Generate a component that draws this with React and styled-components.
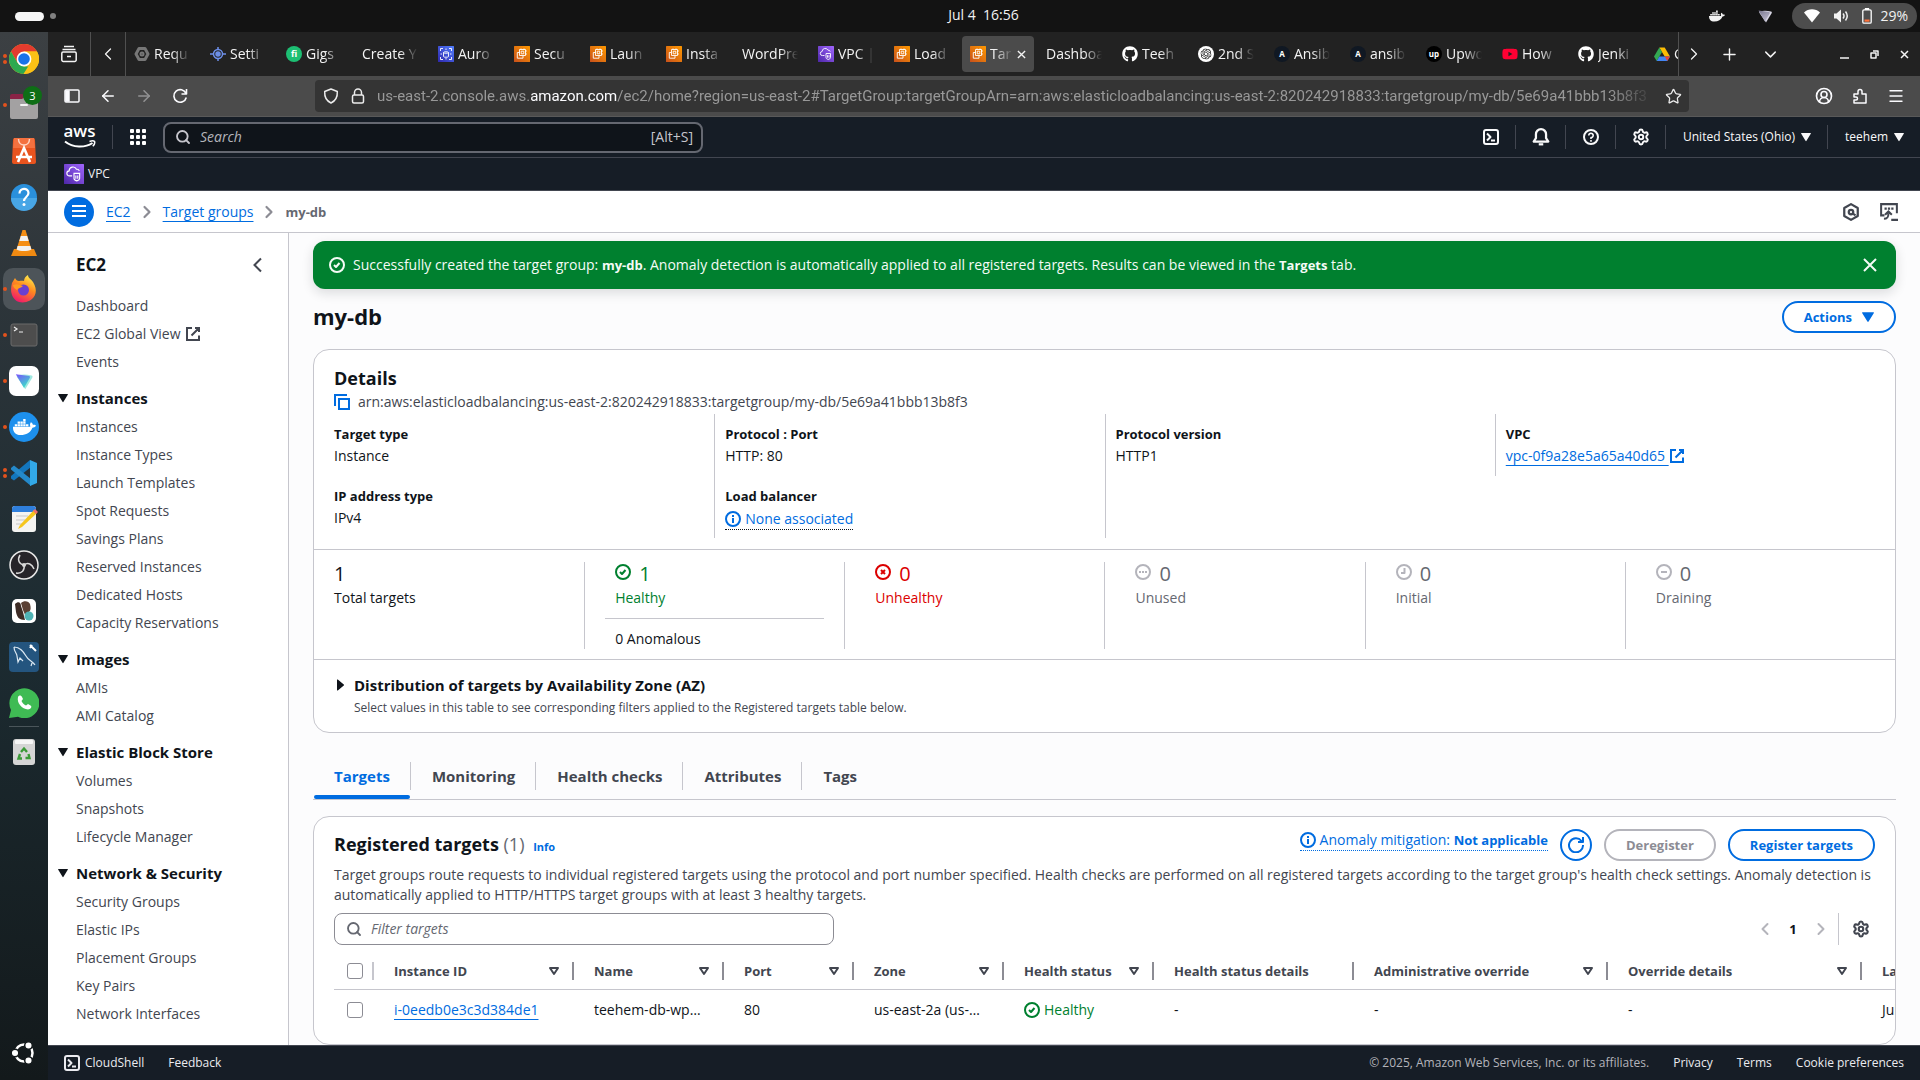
import React from "react";
import styled, { createGlobalStyle, css } from "styled-components";
import { Settings, Menu as MenuIcon, Search, Plus, ChevronDown, ChevronLeft, ChevronRight, ArrowLeft, ArrowRight, Star, CircleUserRound } from "lucide-react";
import { FaDocker, FaGithub, FaYoutube } from "react-icons/fa";
import { SiOpenai } from "react-icons/si";

const blue = "#006ce0";
const line = "#c6c6cd";
const navText = "#424650";
const ink = "#0f141a";

const GlobalStyle = createGlobalStyle`
  * { box-sizing: border-box; }
  body { margin: 0; font-family: "Open Sans", "Noto Sans", sans-serif; font-size: 14px; line-height: 20px; color: ${ink}; }
  button, input { font: inherit; color: inherit; }
  button { background: none; border: 0; padding: 0; display: inline-flex; align-items: center; justify-content: center; }
  h1, h2, h3, p, ul, dl, dd, dt { margin: 0; padding: 0; }
  ul { list-style: none; }
  svg { display: block; flex: none; }
`;

/* ---------- shell ---------- */
const Desktop = styled.div`
  display: flex; flex-direction: column; height: 100vh; overflow: hidden; background: #131313;
`;
const SystemBar = styled.header`
  flex: none; height: 32px; padding: 0 3px 0 50px; background: #131313; color: #f2f2f2;
  display: grid; grid-template-columns: 1fr auto 1fr; align-items: center; font-size: 14px; line-height: 18px;
`;
const Workspaces = styled.div`
  display: flex; align-items: center; gap: 6px; margin-left: -35px;
`;
const WorkspaceMark = styled.span`
  width: ${(p) => (p.$active ? 29 : 6)}px; height: ${(p) => (p.$active ? 9 : 6)}px;
  border-radius: 5px; background: ${(p) => (p.$active ? "#f6f6f6" : "#808080")};
`;
const Clock = styled.time`white-space: pre; padding-bottom: 2px;`;
const Tray = styled.div`display: flex; justify-content: flex-end; align-items: center;`;
const TrayIcon = styled.span`width: 48px; display: flex; justify-content: center;`;
const StatusPill = styled.button`
  height: 26px; margin-left: 3px; padding: 0 9px 0 12px; gap: 13px; border-radius: 13px; background: #4d4d4d;
`;
const Charge = styled.span`display: flex; align-items: center; gap: 8px;`;
const Stage = styled.div`flex: 1; min-height: 0; display: flex;`;

/* ---------- dock ---------- */
const Dock = styled.nav`
  flex: none; width: 48px; padding: 6px 3px 6px; display: flex; flex-direction: column; gap: 4px;
  background: linear-gradient(#3c4043 0, #2d353a 260px, #1c2b31 620px, #13191b 1048px);
`;
const DockButton = styled.button`
  position: relative; width: 42px; height: 42px; border-radius: 10px;
  background: ${(p) => (p.$active ? "#4d5459" : "none")};
  ${(p) => p.$last && css`margin-top: auto;`}
`;
const RunDots = styled.span`
  position: absolute; left: 0; top: 0; bottom: 0; display: flex; flex-direction: column; justify-content: center; gap: 2px;
  i { width: 4px; height: 4px; border-radius: 50%; background: #e2521d; }
`;
const Badge = styled.span`
  position: absolute; right: 3px; top: 2px; width: 19px; height: 19px; border-radius: 50%;
  background: #0e6e16; color: #fff; font-size: 11px; line-height: 19px; text-align: center;
`;
const DockRule = styled.hr`width: 30px; height: 1px; border: 0; background: #4a555a; margin: -2px auto 0;`;

/* ---------- browser chrome ---------- */
const Browser = styled.div`flex: 1; min-width: 0; display: flex; flex-direction: column;`;
const TabStrip = styled.div`
  flex: none; height: 44px; display: flex; background: #222222; color: #f4f4f4;
`;
const StripButton = styled.button`
  flex: none; width: ${(p) => p.$w}px; ${(p) => p.$rule && css`border-right: 1px solid #505050;`}
`;
const TabList = styled.div`
  flex: 1; min-width: 0; overflow: hidden; display: flex; align-items: center;
  border-right: 1px solid #505050;
`;
const Tab = styled.button`
  flex: none; width: 72px; height: 36px; margin-right: 4px; padding: 0 8px; gap: 4px; border-radius: 4px;
  justify-content: flex-start; background: ${(p) => (p.$active ? "#4b4b4b" : "none")};
`;
const TabText = styled.span`
  flex: 1; min-width: 0; overflow: hidden; white-space: nowrap; text-align: left;
  mask-image: linear-gradient(90deg, #000 calc(100% - 18px), transparent);
`;
const WindowButtons = styled.div`flex: none; width: 129px; display: flex; justify-content: space-between; padding: 0 11px 0 49px;`;
const AddressRow = styled.div`
  flex: none; height: 41px; padding: 0 6px 0 0; display: flex; align-items: center; background: #4b4b4b;
  border-bottom: 1px solid #595959; color: #fbfbfe;
`;
const NavButtons = styled.div`display: flex; padding-left: 6px;`;
const NavButton = styled.button`width: 36px; height: 32px; opacity: ${(p) => (p.disabled ? 0.4 : 1)};`;
const AddressBox = styled.div`
  flex: 0 1 1374px; min-width: 0; height: 32px; margin: 0 auto 0 117px; padding: 0 7px 0 8px; gap: 11px;
  display: flex; align-items: center; border-radius: 4px; background: #343434; color: #ececec;
`;
const Address = styled.div`
  flex: 1; min-width: 0; overflow: hidden; white-space: nowrap; font-family: Roboto, "Open Sans", sans-serif; font-size: 15px; color: #989898;
  mask-image: linear-gradient(90deg, #000 calc(100% - 44px), transparent);
  b { font-weight: 400; color: #fbfbfe; }
`;
const RightTools = styled.div`display: flex; margin-left: auto;`;

/* ---------- aws header ---------- */
const AwsBar = styled.header`
  flex: none; height: 41px; padding-left: 16px; display: flex; align-items: center; background: #161d26; color: #f9f9fa;
  border-bottom: 1px solid #424650; font-size: 12px;
`;
const LogoLink = styled.a`padding-right: 16px; border-right: 1px solid #424650; display: flex; align-items: center; height: 24px; color: #fff;`;
const Services = styled.button`width: 50px;`;
const GlobalSearch = styled.label`
  flex: 0 1 540px; height: 31px; padding: 0 8px 0 10px; display: flex; align-items: center; gap: 9px; font-size: 14px;
  border: 2px solid #656871; border-radius: 8px; background: #0f141a; color: #c6c6cd;
  input { flex: 1; min-width: 0; background: none; border: 0; outline: 0; padding: 0; }
  input::placeholder { color: #b4b4bb; font-style: italic; opacity: 1; }
`;
const AwsTools = styled.div`display: flex; margin-left: auto;`;
const AwsTool = styled.button`
  height: 24px; width: ${(p) => (p.$text ? "auto" : "50px")}; padding: ${(p) => (p.$text ? "0 16px 0 17px" : 0)}; gap: 6px;
  border-right: 1px solid #424650; &:last-child { border-right: 0; }
`;
const Favorites = styled.nav`
  flex: none; height: 33px; padding: 0 16px; display: flex; align-items: center; background: #161d26;
  border-bottom: 1px solid #424650;
  a { display: flex; align-items: center; gap: 4px; color: #f0f0f2; font-size: 12px; text-decoration: none; }
`;
const CrumbBar = styled.nav`
  flex: none; height: 42px; padding: 0 22px 0 16px; display: flex; align-items: center; background: #fff; border-bottom: 1px solid ${line};
`;
const MenuButton = styled.button`width: 30px; height: 30px; border-radius: 50%; background: ${blue}; color: #fff; margin-right: 12px; padding-bottom: 2px;`;
const Link = styled.a`color: ${blue}; text-decoration: underline; text-underline-offset: 4px; text-decoration-thickness: 1px;`;
const Crumbs = styled.div`display: flex; align-items: center; gap: 6px; b { font-size: 13px; color: #656871; }`;
const CrumbTools = styled.div`margin-left: auto; display: flex; gap: 20px; color: ${navText};`;

/* ---------- side navigation ---------- */
const Page = styled.div`flex: 1; min-height: 0; display: flex; background: #fcfcfd;`;
const Side = styled.aside`
  flex: none; width: 241px; overflow: hidden; background: #fff; border-right: 1px solid ${line};
`;
const SideHead = styled.div`
  display: flex; justify-content: space-between; align-items: center; padding: 20px 22px 16px 28px; height: 59px;
  h2 { font-size: 17px; line-height: 24px; } button { color: ${navText}; }
`;
const SideList = styled.ul`
  padding-left: 28px;
  li { height: 28px; display: flex; align-items: center; }
  a { color: ${navText}; text-decoration: none; display: flex; align-items: center; gap: 5px; }
`;
const SideGroup = styled.button`
  height: 30px; padding-left: 10px; gap: 8px; font-weight: 700; font-size: 15px; margin-top: 7px; display: flex;
`;

/* ---------- main ---------- */
const Main = styled.main`flex: 1; min-width: 0; overflow: hidden; padding: 8px 24px 0;`;
const Flash = styled.div`
  height: 48px; padding: 0 18px 0 16px; display: flex; align-items: center; gap: 8px; border-radius: 12px;
  background: #00802f; color: #f4fbf6; box-shadow: 0 4px 12px rgba(15, 20, 26, 0.14);
  b { font-size: 13px; } button { margin-left: auto; }
`;
const TitleRow = styled.div`
  height: 60px; padding-top: 12px; display: flex; justify-content: space-between; align-items: flex-start;
  h1 { font-size: 22px; line-height: 30px; }
`;
const Pill = styled.button`
  height: 32px; padding: 0 20px; gap: 10px; font-weight: 700; font-size: 13px; border-radius: 20px; border: 2px solid ${blue}; color: ${blue}; background: #fff;
  &:disabled { border-color: #b4b4bb; color: #8c8c94; }
`;
const RoundPill = styled(Pill)`width: 32px; padding: 0;`;
const Card = styled.section`border: 1px solid ${line}; border-radius: 16px; background: #fff; overflow: hidden;`;
const CardHead = styled.div`
  padding: 16px 20px 2px;
  h2 { font-size: 18px; line-height: 24px; }
`;
const Arn = styled.p`
  display: flex; align-items: center; gap: 8px; margin-top: 2px; color: ${navText};
  button { color: ${blue}; }
`;
const Facts = styled.div`
  display: grid; grid-template-columns: repeat(4, 1fr); align-items: start; padding: 0 10px 11px; border-bottom: 1px solid ${line};
`;
const FactColumn = styled.dl`
  & + & { border-left: 1px solid ${line}; }
  > div { padding: 10px; }
  dt { font-weight: 700; font-size: 13px; margin-bottom: 2px; }
  dd { height: 20px; display: flex; }
  a { display: flex; align-items: center; }
`;
const Hint = styled.button`
  height: 22px; gap: 4px; color: ${blue}; border-bottom: 1px dotted ${(p) => (p.$ink ? ink : blue)};
  b { font-size: 13px; }
`;
const Stats = styled.div`
  display: grid; grid-template-columns: repeat(6, 1fr); padding: 12px 10px 10px; border-bottom: 1px solid ${line};
`;
const Stat = styled.div`
  padding: 0 20px; color: ${(p) => p.$tone || ink};
  & + & { border-left: 1px solid ${line}; }
  &:first-child { padding-left: 0; }
`;
const StatBody = styled.div`padding: 0 10px;`;
const StatValue = styled.div`
  display: flex; gap: 8px; font-size: 20px; line-height: 24px; height: 26px;
  svg { margin-top: 2px; }
`;
const StatExtra = styled.div`margin-top: 10px; padding: 10px 10px 0; border-top: 1px solid ${line}; color: ${ink};`;
const StatIcon = styled.span`color: ${(p) => (p.$muted ? "#b4b4bb" : "inherit")};`;
const Expander = styled.div`
  padding: 13px 20px 13px; display: flex; gap: 7px;
  h3 { font-size: 15px; line-height: 24px; }
  p { font-size: 12px; color: ${navText}; line-height: 22px; }
  button { height: 24px; width: 13px; }
`;
const Tabs = styled.div`
  display: flex; margin-top: 29px; border-bottom: 1px solid ${line};
`;
const PageTab = styled.button`
  flex-direction: column; align-items: stretch; font-size: 15px; font-weight: 700; color: ${(p) => (p.$active ? blue : navText)};
  span { height: 28px; line-height: 28px; padding: 0 20px 0 21px; border-right: 1px solid ${line}; }
  &:last-child span { border-right: 0; }
  &::after { content: ""; height: 4px; margin: 5px 1px 0; border-radius: 2px; background: ${(p) => (p.$active ? blue : "transparent")}; }
`;
const TargetsCard = styled(Card)`margin-top: 16px; padding: 12px 0 14px 20px;`;
const TargetsHead = styled.div`
  display: flex; align-items: center; height: 32px; padding-right: 20px; gap: 12px;
  h2 { font-size: 18px; line-height: 24px; flex: 1; }
  h2 span { font-weight: 400; color: #656871; }
  h2 a { font-size: 11px; text-decoration: none; margin-left: 4px; }
`;
const HintSlot = styled.div`align-self: flex-start;`;
const Blurb = styled.p`margin: 4px 20px 8px 0; color: ${navText};`;
const FilterRow = styled.div`display: flex; align-items: center; justify-content: space-between; padding-right: 20px;`;
const FilterBox = styled.label`
  width: 500px; height: 32px; padding: 0 11px; display: flex; align-items: center; gap: 9px; border: 1px solid #8c8c94; border-radius: 8px; color: #656871;
  input { flex: 1; border: 0; outline: 0; padding: 0; background: none; }
  input::placeholder { color: #656871; font-style: italic; opacity: 1; }
`;
const Pager = styled.div`
  display: flex; align-items: center; height: 32px;
  button { width: 28px; height: 32px; color: #b4b4bb; }
  button[aria-current] { color: ${ink}; font-weight: 700; font-size: 13px; }
`;
const Prefs = styled.div`
  margin-left: 3px; padding-left: 8px; border-left: 1px solid ${line};
  && button { color: ${navText}; }
`;
const Table = styled.table`
  margin-top: 10px; width: 1762px; table-layout: fixed; border-collapse: collapse;
  th { height: 34px; padding: 0 0 2px; text-align: left; font-size: 13px; color: ${navText}; border-bottom: 1px solid ${line}; }
  td { height: 41px; padding: 0 22px 0 20px; overflow: hidden; text-overflow: ellipsis; white-space: nowrap; }
`;
const HeadCell = styled.div`
  display: flex; align-items: center; gap: 13px; height: 18px; padding-left: ${(p) => (p.$check ? 13 : 20)}px;
  border-right: 2px solid ${(p) => (p.$check ? line : "#8c8c94")};
  span { flex: 1; white-space: nowrap; } button { padding-right: 13px; }
`;
const CheckCell = styled.td`&& { padding: 0 0 0 13px; }`;
const Check = styled.input`
  appearance: none; display: block; width: 16px; height: 16px; margin: 0; border: 1px solid #8c8c94; border-radius: 3px; background: #fff;
`;
const Health = styled.span`display: flex; align-items: center; gap: 4px; color: #00802f;`;

/* ---------- footer ---------- */
const Footer = styled.footer`
  flex: none; height: 35px; padding: 0 16px; display: flex; align-items: center; background: #161d26; border-top: 1px solid #424650;
  color: #ebebf0; font-size: 12px;
  button { gap: 5px; margin-right: 24px; }
  a { color: inherit; text-decoration: none; margin-left: 24px; }
`;
const Copyright = styled.span`margin-left: auto; color: #b4b4bb;`;

/* ---------- icons ---------- */
const Ico = ({ s = 16, w = 2, vb = 16, children, ...r }) => (
  <svg width={s} height={s} viewBox={`0 0 ${vb} ${vb}`} fill="none" stroke="currentColor" strokeWidth={w} strokeLinejoin="round" aria-hidden="true" {...r}>{children}</svg>
);
const External = () => <Ico strokeLinejoin="miter"><path d="M10 2h4v4M6.500 9.500 14 2M14 9.500V14H2V2h5" /></Ico>;
const Copy = () => <Ico strokeLinejoin="miter"><path d="M15 5H5v10h10zM13 1H1v11" /></Ico>;
const Ok = () => <Ico><circle cx="8" cy="8" r="7" /><path d="m5 8 2 2 3.500-4" /></Ico>;
const Bad = () => <Ico><circle cx="8" cy="8" r="7" /><path d="m10 6-4 4M10 10 6 6" /></Ico>;
const Dots = () => <Ico><circle cx="8" cy="8" r="7" /><path d="M4 8h2M7 8h2M10 8h2" /></Ico>;
const Wait = () => <Ico><circle cx="8" cy="8" r="7" /><path d="M8.500 4v5H5" /></Ico>;
const Minus = () => <Ico><circle cx="8" cy="8" r="7" /><path d="M5 8h6" /></Ico>;
const Info = () => <Ico><circle cx="8" cy="8" r="7" /><path d="M8 7v5M8 4v2" /></Ico>;
const Refresh = () => <Ico><path d="M10 5h5V0M15 8a7 7 0 1 1-1.500-4L15 5" /></Ico>;
const Shell = ({ s }) => <Ico s={s}><rect x="1" y="1" width="14" height="14" rx="2" /><path d="m4 4.500 3.500 3.500L4 11.500M8 11.500h4" /></Ico>;
const Caret = ({ s = 10 }) => <svg width={s} height={s} viewBox="0 0 10 10" fill="currentColor"><path d="M.5 1h9a.4.4 0 0 1 .4.6L5.500 8.800a.6.6 0 0 1-1 0L.1 1.600A.4.4 0 0 1 .5 1z" /></svg>;
const CaretRight = () => <svg width="9" height="12" viewBox="0 0 9 12" fill={ink}><path d="M1 1v10a.5.5 0 0 0 .8.4l6-5a.5.5 0 0 0 0-.8l-6-5A.5.5 0 0 0 1 1z" /></svg>;
const Filter = () => <Ico s={10} vb={10}><path d="M1 2h8L5 8z" /></Ico>;
const Bell = () => <Ico s={18}><path d="M8 1a4.500 4.500 0 0 0-4.500 4.500V9L1.500 12h13l-2-3V5.500A4.500 4.500 0 0 0 8 1z" /><path d="M6 14.500h4" /></Ico>;
const Help = () => <Ico><circle cx="8" cy="8" r="7" /><path d="M5.800 6.500A2.200 2.200 0 1 1 8 8.600v1.400M8 11v1.800" strokeWidth="1.600" /></Ico>;
const Grid = () => <svg width="17" height="17" viewBox="0 0 17 17" fill="#fff">{[0, 6, 12].map((y) => [0, 6, 12].map((x) => <rect key={x + "-" + y} x={x} y={y} width="4" height="4" rx="1" />))}</svg>;
const Glass = ({ s = 16 }) => <Search size={s} strokeWidth={2.8} />;
const AwsLogo = () => (
  <svg width="32" height="26" viewBox="0 0 32 26">
    <text x="15.500" y="13" textAnchor="middle" fontSize="17" fontWeight="600" fill="#fff" fontFamily="Open Sans">aws</text>
    <path d="M1 17.500c8 6.500 20 6.500 27.500 1.500" fill="none" stroke="#fff" strokeWidth="2" />
    <path d="M25.500 17.500c2-.8 4-.9 5-.2.500 1.500-.3 3.700-1.700 5" fill="none" stroke="#fff" strokeWidth="1.500" />
  </svg>
);
const Tile = ({ s = 16, a, b, id, children }) => (
  <svg width={s} height={s} viewBox="0 0 16 16" fill="none" stroke="#fff" strokeWidth=".9">
    <defs><linearGradient id={id} x1="0" y1="1" x2="1" y2="0"><stop stopColor={a} /><stop offset="1" stopColor={b} /></linearGradient></defs>
    <rect width="16" height="16" rx=".5" fill={`url(#${id})`} stroke="none" />{children}
  </svg>
);
const Ec2 = () => <Tile a="#c8511b" b="#f90" id="ec2"><path d="M5.500 3.500h6v6h-6zM7.200 5.200h2.600v2.600H7.200zM9 9.500v2.700H3.300V6.500h2.200M7 3.500V2.500M10 3.500V2.500M11.500 5h1.400M11.500 8h1.400" /></Tile>;
const VpcIcon = ({ s }) => <Tile s={s} a="#4d27a8" b="#a166ff" id="vpc"><path d="M6.500 9.500H4.500a2 2 0 0 1-.4-4A3.100 3.100 0 0 1 10 4.200c1.500-.2 2 .5 2.200 1.400M8 7.500h4.500v4c0 1-1 1.600-2.200 2-1.300-.4-2.300-1-2.300-2zM9.500 9.200v2.500M11 9.200v2.500" /></Tile>;
const Aurora = () => <Tile a="#2e27ad" b="#527fff" id="aur"><path d="M5.500 6.500c0-1 5-1 5 0v4c0 1-5 1-5 0zM5.500 6.500c0 1 5 1 5 0M2.500 5V2.500H5M11 2.500h2.500V5M13.500 11v2.500H11M5 13.500H2.500V11M2.500 8h1.500M12 8h1.500M8 2.500v1.500M8 12v1.500" /></Tile>;
const Nut = () => <Ico w={3} color="#777"><path d="M5 2.500h6L14 8l-3 5.500H5L2 8z" /><circle cx="8" cy="8" r="1.500" strokeWidth="2" /></Ico>;
const Orbit = () => <Ico w={1.5} color="#6d8fe8"><circle cx="8" cy="8" r="4.500" /><circle cx="8" cy="8" r="2" fill="currentColor" /><path d="M0 8h3.500M12.500 8H16M8 1v2.500M8 12.500V15" /></Ico>;
const Disc = ({ bg, children, size = 8 }) => (
  <svg width="16" height="16" viewBox="0 0 16 16"><circle cx="8" cy="8" r="8" fill={bg} /><text x="8" y="11" textAnchor="middle" fontSize={size} fontWeight="700" fill="#fff" fontFamily="Open Sans">{children}</text></svg>
);
const Drive = () => <svg width="16" height="16" viewBox="0 0 16 16"><path d="M5.300 1.500h5.400L16 10.500h-5.300z" fill="#fbbc04" /><path d="M5.300 1.500 8 6 2.700 15 0 10.500z" fill="#34a853" /><path d="M5.300 10.500H16L13.300 15H2.700z" fill="#4285f4" /><path d="M10.700 10.500H16L13.300 15z" fill="#ea4335" /></svg>;
const Gpt = () => <svg width="16" height="16" viewBox="0 0 16 16"><circle cx="8" cy="8" r="8" fill="#fff" /><g transform="translate(2.500 2.500)"><SiOpenai size={11} color="#111" /></g></svg>;
const Proton = ({ s = 16, mono }) => (
  <svg width={s} height={s} viewBox="0 0 16 16"><defs><linearGradient id={mono ? "pm" : "pc"} x1="0" y1="0" x2=".6" y2="1"><stop stopColor={mono ? "#77758c" : "#7b4dff"} /><stop offset="1" stopColor={mono ? "#bbb8cc" : "#3be0c8"} /></linearGradient></defs>
    <path d="M2 3.500c4-1 8-1 12 0 1 .3 1 1 .6 1.800L9 14.500 2.500 5z" fill={mono ? "#d8d6e4" : "#9fe8e0"} /><path d="M1.500 2.500 12 4c.8.2 1 .8.600 1.500L8 13.500z" fill={`url(#${mono ? "pm" : "pc"})`} /></svg>
);

/* dock artwork, each drawn on a 30 unit square */
const Art = ({ children }) => <svg width="30" height="30" viewBox="0 0 30 30">{children}</svg>;
const Chrome = () => <Art><circle cx="15" cy="15" r="15" fill="#fbc116" /><path d="M2 7.500A15 15 0 0 1 28 7.500H15L8.500 18.700z" fill="#e33b2e" /><path d="M2 7.500 8.500 18.700 15 22.500h6.500L14.500 30A15 15 0 0 1 2 7.500z" fill="#2da94f" /><path d="M21.500 18.700 14.500 30A15 15 0 0 0 28 7.500H15z" fill="#fbc116" /><circle cx="15" cy="15" r="7.400" fill="#fff" /><circle cx="15" cy="15" r="5.800" fill="#1a73e8" /></Art>;
const Files = () => <Art><rect x="1" y="4" width="14" height="12" rx="2" fill="#8a2346" /><path d="M1 9h12l3-2h13v20a2 2 0 0 1-2 2H3a2 2 0 0 1-2-2z" fill="#a3a1a2" /><rect x="11" y="14" width="8" height="2" rx="1" fill="#f3f3f3" /></Art>;
const Store = () => <Art><path d="M6 2h18a2 2 0 0 1 2 2l1 22a2 2 0 0 1-2 2H5a2 2 0 0 1-2-2L4 4a2 2 0 0 1 2-2z" fill="#e9541f" /><path d="M5 2h20l1 10H4z" fill="#f4713f" /><path d="M9.500 3c0 8 11 8 11 0" fill="none" stroke="#ffd2bf" strokeWidth="1.500" /><path d="M9 26 15 12l6 14M7 21h16" fill="none" stroke="#fff" strokeWidth="2.600" /></Art>;
const HelpDock = () => <Art><circle cx="15" cy="15" r="13" fill="#2a90dc" /><path d="M2 16h26a13 13 0 0 1-26 0z" fill="#48a6e6" /><path d="M10.500 11.500c0-6 9-6 9-.5 0 4-4.500 4-4.500 8" fill="none" stroke="#fff" strokeWidth="2.200" /><circle cx="15" cy="22.500" r="1.500" fill="#fff" /></Art>;
const Vlc = () => <Art><path d="M5 21h20l3 7H2z" fill="#f08a12" /><path d="M13.500 2h3L23 23c-4 2.500-12 2.500-16 0z" fill="#f58e14" /><path d="M11.800 8h6.400l1.500 5h-9.400zM8.600 18h12.800l1 3.500c-4 2-11 2-14.800 0z" fill="#f1f1f1" /></Art>;
const Firefox = () => <Art><defs><linearGradient id="fx" x1=".8" y1="0" x2=".3" y2="1"><stop stopColor="#fff44f" /><stop offset=".45" stopColor="#ff8a1e" /><stop offset="1" stopColor="#f0166c" /></linearGradient></defs><path d="M3 9c1-2 2-3 3-5 1 2 2 3 4 3 2-.5 4-.5 5 0 0-3 2-5 4-6 0 3 3 4 5 7 5 8 3 15-3 18.500C14 30 6 29 3 21c-1.500-4-1-8 0-12z" fill="url(#fx)" /><circle cx="14.500" cy="16" r="5.500" fill="#6b3fd0" /><path d="M4 11c4-2 7 0 10 1-2 2-5 2-6 4-2-1-4-3-4-5z" fill="#ff9a1f" /></Art>;
const Term = () => <Art><rect x="2" y="4" width="26" height="22" rx="2" fill="#4d4d4d" stroke="#6a6a6a" /><path d="m5 7 3 2-3 2M10 12h4" fill="none" stroke="#eee" strokeWidth="1.200" /></Art>;
const ProtonDock = () => <Art><rect width="30" height="30" rx="7" fill="#fff" /><g transform="translate(5 5)"><Proton s={20} /></g></Art>;
const DockerDock = () => <Art><circle cx="15" cy="15" r="15" fill="#1d90ed" /><g transform="translate(4 3.500)"><FaDocker size={23} color="#fff" /></g></Art>;
const Code = () => <Art><path d="M21 2 22 9 5 22.500l-3-2V18z" fill="#1376bd" /><path d="M2 11.500V10l3-2.500L22 21v7z" fill="#2489ca" /><path d="M21 2l7 3v20l-7 3z" fill="#32a9e8" /></Art>;
const Editor = () => <Art><rect x="3" y="2" width="24" height="26" rx="3" fill="#f4f4f2" /><path d="M6 2h18a3 3 0 0 1 3 3v3H3V5a3 3 0 0 1 3-3z" fill="#2f7fdc" /><path d="M7 12h12M7 16h9M7 20h6" stroke="#c7c7c7" /><path d="m9 25 2-4L25 6l3 3-15 14z" fill="#f6c61c" /><path d="m24 7 2-2 3 3-2 2z" fill="#ef6f6c" /></Art>;
const Obs = () => <Art><circle cx="15" cy="15" r="14" fill="#262429" stroke="#e8e8e8" strokeWidth="1.500" /><path d="M15 15c-5-1-7-5-4-10M15 15c4-3 8-1 10 4M15 15c1 5-2 9-8 8" fill="none" stroke="#d8d8d8" strokeWidth="1.500" /><circle cx="15" cy="15" r="2" fill="#d8d8d8" /></Art>;
const Beaver = () => <Art><rect x="3" y="3" width="24" height="24" rx="5" fill="#fff" /><path d="M6 8c3-3 6-2 6 2l2 6 2 8c-6 0-8-3-9-8z" fill="#3c2b25" /><path d="M12 7c3-3 8-2 9 1 1 4 1 6-1 8l-3 5-3-7z" fill="#5b4034" /><circle cx="20" cy="20" r="4.500" fill="#4fb3b5" /></Art>;
const MySql = () => <Art><rect width="30" height="30" rx="4" fill="#24557f" /><path d="M5 5c6 0 9 4 12 9 2 4 6 5 9 9M5 5c0 5 3 6 3 9l1 6 2-4 3 3M23 21l-1 3" fill="none" stroke="#dce9f3" strokeWidth="1.200" /><path d="m21 3 6 6M21 6l2-3" stroke="#fff" strokeWidth="2" /></Art>;
const WhatsDock = () => <Art><path d="M0 30 2 22A15 15 0 1 1 9 28.800z" fill="#3fbb54" /><path d="M9 9c1-2 3-2 4 0l1 2-1.500 2c1 2 2.500 3.500 4.500 4.500l2-1.500 2.500 1.500c2 1 0 4-2.500 4C13 21 7.500 15 9 9z" fill="#fff" /></Art>;
const Trash = () => <Art><rect x="4" y="2" width="22" height="26" rx="3" fill="#d5d5d5" /><rect x="6" y="3" width="18" height="4" rx="1" fill="#f6f6f6" /><g fill="none" stroke="#3b9a37" strokeWidth="2.400"><path d="m12 15 3-3.500 3 3.500M19.500 17l1 4h-4M13 21.500H9.500l1.500-4.500" /></g></Art>;
const Ubuntu = () => <Art><circle cx="15" cy="15" r="8.500" fill="none" stroke="#fff" strokeWidth="2.500" /><circle cx="19.500" cy="7.500" r="3.800" fill="#fff" stroke="#13191b" strokeWidth="1.500" /><circle cx="6" cy="15" r="3.800" fill="#fff" stroke="#13191b" strokeWidth="1.500" /><circle cx="19.500" cy="22.500" r="3.800" fill="#fff" stroke="#13191b" strokeWidth="1.500" /></Art>;

/* ---------- data ---------- */
const dockApps = [
  ["Chrome", <Chrome />, 2], ["Files", <Files />, 1, "3"], ["App Center", <Store />, 0], ["Help", <HelpDock />, 0], ["VLC", <Vlc />, 0],
  ["Firefox", <Firefox />, 1], ["Terminal", <Term />, 1], ["Proton VPN", <ProtonDock />, 1], ["Docker", <DockerDock />, 1],
  ["VS Code", <Code />, 2], ["Text Editor", <Editor />, 0], ["OBS", <Obs />, 0], ["DBeaver", <Beaver />, 0], ["MySQL Workbench", <MySql />, 0], ["WhatsApp", <WhatsDock />, 0],
];
const tabs = [
  [<Nut />, "Requ"], [<Orbit />, "Setti"], [<Disc bg="#1dbf73" size={9}>fi</Disc>, "Gigs"], [null, "Create Y"], [<Aurora />, "Auro"],
  [<Ec2 />, "Secu"], [<Ec2 />, "Laun"], [<Ec2 />, "Insta"], [null, "WordPre"], [<VpcIcon />, "VPC |"], [<Ec2 />, "Load"],
  [<Ec2 />, "Tar", true], [null, "Dashboa"], [<FaGithub size={16} color="#fff" />, "Teeh"], [<Gpt />, "2nd S"], [<Disc bg="#101823">A</Disc>, "Ansib"],
  [<Disc bg="#101823">A</Disc>, "ansib"], [<Disc bg="#000">up</Disc>, "Upwo"], [<FaYoutube size={16} color="#ff0033" />, "How"], [<FaGithub size={16} color="#fff" />, "Jenki"], [<Drive />, "G"],
];
const navTop = ["Dashboard", "EC2 Global View", "Events"];
const navGroups = [
  ["Instances", ["Instances", "Instance Types", "Launch Templates", "Spot Requests", "Savings Plans", "Reserved Instances", "Dedicated Hosts", "Capacity Reservations"]],
  ["Images", ["AMIs", "AMI Catalog"]],
  ["Elastic Block Store", ["Volumes", "Snapshots", "Lifecycle Manager"]],
  ["Network & Security", ["Security Groups", "Elastic IPs", "Placement Groups", "Key Pairs", "Network Interfaces"]],
  ["Load Balancing", []],
];
const stats = [
  ["1", "Total targets", ink, null], ["1", "Healthy", "#00802f", <Ok />, "0 Anomalous"], ["0", "Unhealthy", "#db0000", <Bad />],
  ["0", "Unused", "#656871", <Dots />], ["0", "Initial", "#656871", <Wait />], ["0", "Draining", "#656871", <Minus />],
];
const columns = [
  ["Instance ID", 200, true], ["Name", 150, true], ["Port", 130, true], ["Zone", 150, true], ["Health status", 150, true],
  ["Health status details", 200, false], ["Administrative override", 254, true], ["Override details", 254, true], ["Launch time", 234, false],
];

export default function App() {
  return (
    <Desktop>
      <GlobalStyle />
      <SystemBar>
        <Workspaces><WorkspaceMark $active /><WorkspaceMark /></Workspaces>
        <Clock>{"Jul 4  16:56"}</Clock>
        <Tray>
          <TrayIcon><FaDocker size={16} /></TrayIcon>
          <TrayIcon><Proton mono /></TrayIcon>
          <StatusPill aria-label="System menu">
            <svg width="16" height="14" viewBox="0 0 16 14" fill="#fff"><path d="M0 3.500C4.500-.8 11.500-.8 16 3.500L8 13.500z" /></svg>
            <Ico w={1.5}><path d="M1 5.500h2.500L8 1.500v13l-4.500-4H1z" fill="currentColor" stroke="none" /><path d="M10 5.500c1.200 1.500 1.200 3.500 0 5M12.500 3.500c2.200 2.800 2.200 6.200 0 9" /></Ico>
            <Charge>
              <svg width="10" height="16" viewBox="0 0 10 16" fill="none" stroke="#fff" strokeWidth="1.300"><path d="M3.500 1.500V.7h3v.8M2 1.800h6a1.200 1.200 0 0 1 1.200 1.200v11A1.200 1.200 0 0 1 8 15.200H2A1.200 1.200 0 0 1 .8 14V3A1.200 1.200 0 0 1 2 1.800z" /><path d="M2.500 11.500h5v2.200h-5z" fill="#ff7139" stroke="none" /></svg>
              29%
            </Charge>
          </StatusPill>
        </Tray>
      </SystemBar>
      <Stage>
        <Dock aria-label="Dock">
          {dockApps.map(([name, art, dots, badge]) => (
            <DockButton key={name} aria-label={name} $active={name === "Firefox"}>
              <RunDots>{Array.from({ length: dots }, (_, i) => <i key={i} />)}</RunDots>
              {art}
              {badge && <Badge>{badge}</Badge>}
            </DockButton>
          ))}
          <DockRule />
          <DockButton aria-label="Trash"><Trash /></DockButton>
          <DockButton aria-label="Show apps" $last><Ubuntu /></DockButton>
        </Dock>
        <Browser>
          <TabStrip>
            <StripButton $w={43} $rule aria-label="Firefox View"><Ico s={18} w={1.5} vb={18}><path d="M4 1.500h10M2.500 4.500h13M3 7h12a1.200 1.200 0 0 1 1.200 1.200V15A1.500 1.500 0 0 1 14.700 16.500H3.300A1.500 1.500 0 0 1 1.800 15V8.200A1.200 1.200 0 0 1 3 7zM7 11.500h4" /></Ico></StripButton>
            <StripButton $w={35} $rule aria-label="Scroll tabs left"><ChevronLeft size={20} strokeWidth={1.5} /></StripButton>
            <TabList role="tablist">
              {tabs.map(([icon, text, active], i) => (
                <Tab key={i} role="tab" $active={active}>{icon}<TabText>{text}</TabText>{active && <Ico s={9} w={1.5} vb={10}><path d="m1 1 8 8M9 1 1 9" /></Ico>}</Tab>
              ))}
            </TabList>
            <StripButton $w={30} aria-label="Scroll tabs right"><ChevronRight size={20} strokeWidth={1.5} /></StripButton>
            <StripButton $w={40} aria-label="New tab"><Plus size={19} strokeWidth={1.8} /></StripButton>
            <StripButton $w={42} aria-label="List all tabs"><ChevronDown size={19} strokeWidth={1.8} /></StripButton>
            <WindowButtons>
              <button aria-label="Minimize"><Ico s={9} vb={9} w={1.5}><path d="M0 8h9" /></Ico></button>
              <button aria-label="Restore"><Ico s={9} vb={9} w={1.5}><path d="M1 3h5v5H1zM3 1h5v5" /></Ico></button>
              <button aria-label="Close"><Ico s={9} vb={9} w={1.5}><path d="m1 1 7 7M8 1 1 8" /></Ico></button>
            </WindowButtons>
          </TabStrip>
          <AddressRow>
            <NavButtons>
              <NavButton aria-label="Sidebar"><Ico w={1.5}><rect x="1" y="2" width="14" height="12" rx="1" /><path d="M2 3h3v10H2z" fill="currentColor" /></Ico></NavButton>
              <NavButton aria-label="Back"><ArrowLeft size={18} strokeWidth={2} /></NavButton>
              <NavButton aria-label="Forward" disabled><ArrowRight size={18} strokeWidth={2} /></NavButton>
              <NavButton aria-label="Reload"><Ico w={1.6}><path d="M14.500 1v5h-5M14 5.500A6.300 6.300 0 1 0 14.300 9.500" /></Ico></NavButton>
            </NavButtons>
            <AddressBox>
              <Ico w={1.5}><path d="M8 1 14.300 3.500c.3 5-2 9.500-6.300 11.500C3.700 13 1.400 8.500 1.700 3.500z" /></Ico>
              <Ico w={1.5}><rect x="2.500" y="7" width="11" height="8" rx="1.500" /><path d="M4.500 7V4.500a3.500 3.500 0 0 1 7 0V7" /></Ico>
              <Address>us-east-2.console.aws.<b>amazon.com</b>/ec2/home?region=us-east-2#TargetGroup:targetGroupArn=arn:aws:elasticloadbalancing:us-east-2:820242918833:targetgroup/my-db/5e69a41bbb13b8f3</Address>
              <Star size={17} strokeWidth={1.8} />
            </AddressBox>
            <RightTools>
              <NavButton aria-label="Account"><CircleUserRound size={18} strokeWidth={2.2} /></NavButton>
              <NavButton aria-label="Extensions"><Ico w={1.5}><path d="M2 6h4V3.500a2 2 0 0 1 4 0V6h4v9H2v-3h2a1.500 1.500 0 0 0 0-3H2z" /></Ico></NavButton>
              <NavButton aria-label="Menu"><MenuIcon size={18} strokeWidth={1.8} /></NavButton>
            </RightTools>
          </AddressRow>

          <AwsBar>
            <LogoLink href="#home" aria-label="AWS"><AwsLogo /></LogoLink>
            <Services aria-label="Services"><Grid /></Services>
            <GlobalSearch><Glass /><input type="text" placeholder="Search" aria-label="Search" /><span>[Alt+S]</span></GlobalSearch>
            <AwsTools>
              <AwsTool aria-label="CloudShell"><Shell s={16} /></AwsTool>
              <AwsTool aria-label="Notifications"><Bell /></AwsTool>
              <AwsTool aria-label="Help"><Help /></AwsTool>
              <AwsTool aria-label="Settings"><Settings size={18} strokeWidth={2.6} /></AwsTool>
              <AwsTool $text>United States (Ohio)<Caret /></AwsTool>
              <AwsTool $text>teehem<Caret /></AwsTool>
            </AwsTools>
          </AwsBar>
          <Favorites><a href="#vpc"><VpcIcon s={20} />VPC</a></Favorites>
          <CrumbBar>
            <MenuButton aria-label="Toggle navigation"><Ico><path d="M1 3h14M1 8h14M1 13h14" /></Ico></MenuButton>
            <Crumbs>
              <Link href="#ec2">EC2</Link><ChevronRight size={20} strokeWidth={2.6} color="#8c8c94" />
              <Link href="#groups">Target groups</Link><ChevronRight size={20} strokeWidth={2.6} color="#8c8c94" /><b>my-db</b>
            </Crumbs>
            <CrumbTools>
              <button aria-label="Recent"><Ico s={18}><path d="M8 1l6 3.500v7L8 15l-6-3.500v-7z" /><circle cx="8" cy="8" r="2" /><path d="m9 9 3 2" /></Ico></button>
              <button aria-label="Show panel"><Ico s={18} strokeLinejoin="miter"><path d="M4 11H1V1h14v8M4 5h2M7 5h2M10 5h2M10 15h6M3.500 14c3 0 4-1 4-5M4.500 10.500l3-3 3 3" strokeWidth="1.800" /></Ico></button>
            </CrumbTools>
          </CrumbBar>

          <Page>
            <Side>
              <SideHead><h2>EC2</h2><button aria-label="Close navigation"><Ico strokeLinejoin="miter"><path d="M11 1.500 4.500 8l6.500 6.500" /></Ico></button></SideHead>
              <SideList>{navTop.map((t) => <li key={t}><a href="#nav">{t}{t === "EC2 Global View" && <External />}</a></li>)}</SideList>
              {navGroups.map(([title, items]) => (
                <div key={title}>
                  <SideGroup aria-expanded="true"><Caret />{title}</SideGroup>
                  <SideList>{items.map((t) => <li key={t}><a href="#nav">{t}</a></li>)}</SideList>
                </div>
              ))}
            </Side>
            <Main>
              <Flash role="status"><Ok /><span>Successfully created the target group: <b>my-db</b>. Anomaly detection is automatically applied to all registered targets. Results can be viewed in the <b>Targets</b> tab.</span><button aria-label="Dismiss"><Ico><path d="m2 2 12 12M14 2 2 14" /></Ico></button></Flash>
              <TitleRow><h1>my-db</h1><Pill>Actions<Caret s={12} /></Pill></TitleRow>
              <Card>
                <CardHead>
                  <h2>Details</h2>
                  <Arn><button aria-label="Copy ARN"><Copy /></button>arn:aws:elasticloadbalancing:us-east-2:820242918833:targetgroup/my-db/5e69a41bbb13b8f3</Arn>
                </CardHead>
                <Facts>
                  <FactColumn><div><dt>Target type</dt><dd>Instance</dd></div><div><dt>IP address type</dt><dd>IPv4</dd></div></FactColumn>
                  <FactColumn><div><dt>Protocol : Port</dt><dd>HTTP: 80</dd></div><div><dt>Load balancer</dt><dd><Hint $ink><Info />None associated</Hint></dd></div></FactColumn>
                  <FactColumn><div><dt>Protocol version</dt><dd>HTTP1</dd></div><div><dt>&nbsp;</dt><dd /></div></FactColumn>
                  <FactColumn><div><dt>VPC</dt><dd><Link href="#vpc">vpc-0f9a28e5a65a40d65&nbsp;<External /></Link></dd></div></FactColumn>
                </Facts>
                <Stats>
                  {stats.map(([n, label, tone, icon, extra], i) => (
                    <Stat key={label} $tone={tone}>
                      <StatBody><StatValue>{icon && <StatIcon $muted={i > 2}>{icon}</StatIcon>}{n}</StatValue>{label}</StatBody>
                      {extra && <StatExtra>{extra}</StatExtra>}
                    </Stat>
                  ))}
                </Stats>
                <Expander>
                  <button aria-label="Expand distribution"><CaretRight /></button>
                  <div><h3>Distribution of targets by Availability Zone (AZ)</h3><p>Select values in this table to see corresponding filters applied to the Registered targets table below.</p></div>
                </Expander>
              </Card>
              <Tabs role="tablist">
                {["Targets", "Monitoring", "Health checks", "Attributes", "Tags"].map((t, i) => <PageTab key={t} role="tab" $active={i === 0}><span>{t}</span></PageTab>)}
              </Tabs>
              <TargetsCard>
                <TargetsHead>
                  <h2>Registered targets <span>(1)</span> <Link href="#info">Info</Link></h2>
                  <HintSlot><Hint><Info /><span>Anomaly mitigation: <b>Not applicable</b></span></Hint></HintSlot>
                  <RoundPill aria-label="Refresh"><Refresh /></RoundPill>
                  <Pill disabled>Deregister</Pill>
                  <Pill>Register targets</Pill>
                </TargetsHead>
                <Blurb>Target groups route requests to individual registered targets using the protocol and port number specified. Health checks are performed on all registered targets according to the target group's health check settings. Anomaly detection is automatically applied to HTTP/HTTPS target groups with at least 3 healthy targets.</Blurb>
                <FilterRow>
                  <FilterBox><Glass /><input type="text" placeholder="Filter targets" aria-label="Filter targets" /></FilterBox>
                  <Pager>
                    <button aria-label="Previous page"><ChevronLeft size={20} strokeWidth={2.4} /></button>
                    <button aria-current="page">1</button>
                    <button aria-label="Next page"><ChevronRight size={20} strokeWidth={2.4} /></button>
                    <Prefs><button aria-label="Preferences"><Settings size={18} strokeWidth={2.8} /></button></Prefs>
                  </Pager>
                </FilterRow>
                <Table>
                  <colgroup><col width="40" />{columns.map(([t, w]) => <col key={t} width={w} />)}</colgroup>
                  <thead><tr>
                    <th><HeadCell $check><Check type="checkbox" aria-label="Select all" /></HeadCell></th>
                    {columns.map(([t, , f]) => <th key={t}><HeadCell><span>{t}</span>{f && <button aria-label={`Sort by ${t}`}><Filter /></button>}</HeadCell></th>)}
                  </tr></thead>
                  <tbody><tr>
                    <CheckCell><Check type="checkbox" aria-label="Select target" /></CheckCell>
                    <td><Link href="#instance">i-0eedb0e3c3d384de1</Link></td>
                    <td>teehem-db-wp-server</td><td>80</td><td>us-east-2a (us-east)</td>
                    <td><Health><Ok />Healthy</Health></td><td>-</td><td>-</td><td>-</td><td>July 4, 2025</td>
                  </tr></tbody>
                </Table>
              </TargetsCard>
            </Main>
          </Page>
          <Footer>
            <button><Shell s={16} />CloudShell</button><button>Feedback</button>
            <Copyright>© 2025, Amazon Web Services, Inc. or its affiliates.</Copyright>
            <a href="#privacy">Privacy</a><a href="#terms">Terms</a><a href="#cookies">Cookie preferences</a>
          </Footer>
        </Browser>
      </Stage>
    </Desktop>
  );
}
